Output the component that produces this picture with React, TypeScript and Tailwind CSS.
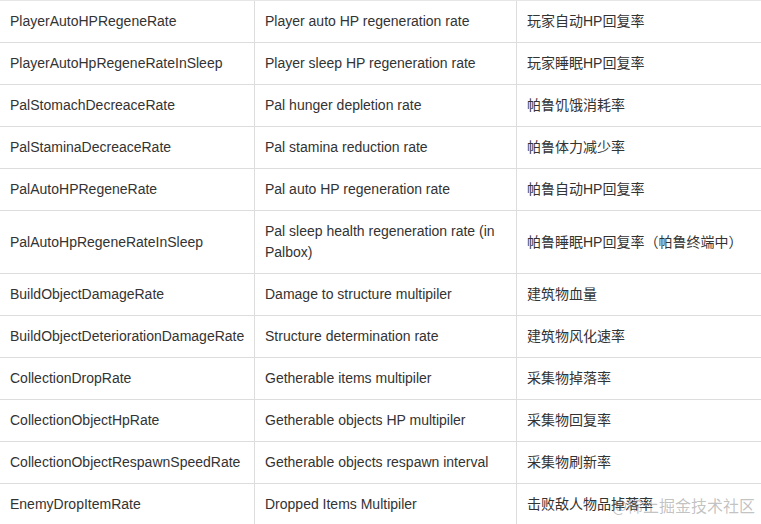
import React from "react";

const rows: [string, string, string][] = [
  ["PlayerAutoHPRegeneRate", "Player auto HP regeneration rate", "玩家自动HP回复率"],
  ["PlayerAutoHpRegeneRateInSleep", "Player sleep HP regeneration rate", "玩家睡眠HP回复率"],
  ["PalStomachDecreaceRate", "Pal hunger depletion rate", "帕鲁饥饿消耗率"],
  ["PalStaminaDecreaceRate", "Pal stamina reduction rate", "帕鲁体力减少率"],
  ["PalAutoHPRegeneRate", "Pal auto HP regeneration rate", "帕鲁自动HP回复率"],
  ["PalAutoHpRegeneRateInSleep", "Pal sleep health regeneration rate (in Palbox)", "帕鲁睡眠HP回复率（帕鲁终端中）"],
  ["BuildObjectDamageRate", "Damage to structure multipiler", "建筑物血量"],
  ["BuildObjectDeteriorationDamageRate", "Structure determination rate", "建筑物风化速率"],
  ["CollectionDropRate", "Getherable items multipiler", "采集物掉落率"],
  ["CollectionObjectHpRate", "Getherable objects HP multipiler", "采集物回复率"],
  ["CollectionObjectRespawnSpeedRate", "Getherable objects respawn interval", "采集物刷新率"],
  ["EnemyDropItemRate", "Dropped Items Multipiler", "击败敌人物品掉落率"],
];

export default function App() {
  return (
    <div
      className="relative w-[761px] h-[524px] overflow-hidden bg-white border-t border-[#e6e6e6] text-[#333333] text-[14px] leading-[21px]"
      style={{ fontFamily: '"Liberation Sans", Arial, "Noto Sans CJK SC", sans-serif' }}
    >
      {rows.map((r, i) => (
        <div key={i} className={`flex ${i === rows.length - 1 ? "" : "border-b border-[#dddddd]"}`}>
          <div className="w-[255px] shrink-0 border-r border-[#dddddd] px-[10px] py-[10px] flex items-center">
            {r[0]}
          </div>
          <div className="w-[262px] shrink-0 border-r border-[#dddddd] px-[10px] py-[10px] flex items-center">
            {r[1]}
          </div>
          <div className="flex-1 px-[10px] py-[10px] flex items-center">
            <span className="leading-[21px]">{r[2]}</span>
          </div>
        </div>
      ))}
      <div
        className="absolute right-[6px] bottom-[8px] text-[16px] leading-[22px] text-[rgba(120,120,120,0.45)]"
        style={{ fontFamily: '"Noto Sans CJK SC", sans-serif' }}
      >
        @稀土掘金技术社区
      </div>
    </div>
  );
}
